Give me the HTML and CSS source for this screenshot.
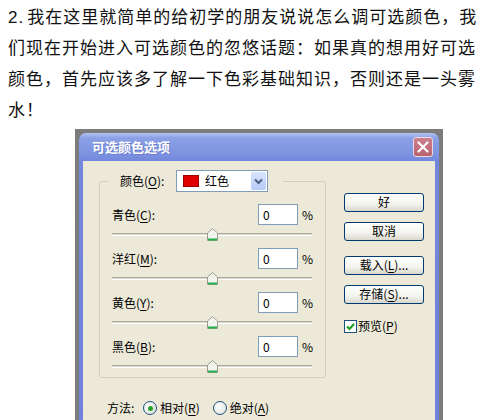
FILE: index.html
```html
<!DOCTYPE html>
<html>

<head>
    <meta charset="UTF-8">
    <title>可选颜色</title>
    <link rel="stylesheet" href="styles.css">
</head>

<body>
    <p class="intro"><span class="no">2.</span>我在这里就简单的给初学的朋友说说怎么调可选颜色，我们现在开始进入可选颜色的忽悠话题：如果真的想用好可选颜色，首先应该多了解一下色彩基础知识，否则还是一头雾水！</p>

    <div class="shot">
        <div class="dlg">
            <div class="dlg-title">
                <span>可选颜色选项</span>
                <a href="javascript:;" class="dlg-close">
                    <svg width="12" height="12" viewBox="0 0 12 12">
                        <path d="M1.5 1.5 L10.5 10.5 M10.5 1.5 L1.5 10.5" stroke="#fff" stroke-width="2.2" stroke-linecap="round" />
                    </svg>
                </a>
            </div>
            <div class="dlg-body">
                <div class="dlg-left">
                    <fieldset class="group">
                        <legend class="group-head">
                            <span class="lbl">颜色(<u>O</u>):</span>
                            <div class="select">
                                <i class="swatch"></i>
                                <span class="select-text">红色</span>
                                <b class="drop">
                                    <svg width="9" height="7" viewBox="0 0 9 7">
                                        <path d="M1 1.5 L4.5 5 L8 1.5" fill="none" stroke="#4d6185" stroke-width="2" />
                                    </svg>
                                </b>
                            </div>
                        </legend>

                        <div class="row">
                            <span class="lbl">青色(<u>C</u>):</span>
                            <span class="num">0</span>
                            <span class="pct">%</span>
                        </div>
                        <div class="slider">
                            <div class="track"></div>
                            <svg class="thumb" width="11" height="13" viewBox="0 0 11 13">
                                <path d="M0.5 5 L5.5 0.5 L10.5 5 L10.5 12.5 L0.5 12.5 Z" fill="#f4f4ef" stroke="#9a9a8c" />
                                <path d="M1 11.5 L10 11.5" stroke="#22b14c" stroke-width="2" />
                            </svg>
                        </div>

                        <div class="row">
                            <span class="lbl">洋红(<u>M</u>):</span>
                            <span class="num">0</span>
                            <span class="pct">%</span>
                        </div>
                        <div class="slider">
                            <div class="track"></div>
                            <svg class="thumb" width="11" height="13" viewBox="0 0 11 13">
                                <path d="M0.5 5 L5.5 0.5 L10.5 5 L10.5 12.5 L0.5 12.5 Z" fill="#f4f4ef" stroke="#9a9a8c" />
                                <path d="M1 11.5 L10 11.5" stroke="#22b14c" stroke-width="2" />
                            </svg>
                        </div>

                        <div class="row">
                            <span class="lbl">黄色(<u>Y</u>):</span>
                            <span class="num">0</span>
                            <span class="pct">%</span>
                        </div>
                        <div class="slider">
                            <div class="track"></div>
                            <svg class="thumb" width="11" height="13" viewBox="0 0 11 13">
                                <path d="M0.5 5 L5.5 0.5 L10.5 5 L10.5 12.5 L0.5 12.5 Z" fill="#f4f4ef" stroke="#9a9a8c" />
                                <path d="M1 11.5 L10 11.5" stroke="#22b14c" stroke-width="2" />
                            </svg>
                        </div>

                        <div class="row">
                            <span class="lbl">黑色(<u>B</u>):</span>
                            <span class="num">0</span>
                            <span class="pct">%</span>
                        </div>
                        <div class="slider">
                            <div class="track"></div>
                            <svg class="thumb" width="11" height="13" viewBox="0 0 11 13">
                                <path d="M0.5 5 L5.5 0.5 L10.5 5 L10.5 12.5 L0.5 12.5 Z" fill="#f4f4ef" stroke="#9a9a8c" />
                                <path d="M1 11.5 L10 11.5" stroke="#22b14c" stroke-width="2" />
                            </svg>
                        </div>
                    </fieldset>

                    <div class="method">
                        <span class="lbl">方法:</span>
                        <span class="radio on"><i></i>相对(<u>R</u>)</span>
                        <span class="radio"><i></i>绝对(<u>A</u>)</span>
                    </div>
                </div>

                <div class="dlg-right">
                    <a href="javascript:;" class="btn">好</a>
                    <a href="javascript:;" class="btn">取消</a>
                    <a href="javascript:;" class="btn btn-gap">载入(<u>L</u>)...</a>
                    <a href="javascript:;" class="btn">存储(<u>S</u>)...</a>
                    <div class="check">
                        <i>
                            <svg width="11" height="11" viewBox="0 0 11 11">
                                <path d="M2 5.5 L4.5 8 L9 3" fill="none" stroke="#21a121" stroke-width="2.2" />
                            </svg>
                        </i>
                        <span>预览(<u>P</u>)</span>
                    </div>
                </div>
            </div>
        </div>
    </div>
</body>

</html>
```

FILE: styles.css
```css
@charset "UTF-8";
/*初始化 reset*/

body,
p,
fieldset,
legend {
    margin: 0;
    padding: 0;
}

body {
    background: #fff;
    color: #000;
    overflow: hidden;
}

a {
    text-decoration: none;
    color: inherit;
}

u {
    text-underline-offset: 2px;
}

/* 正文 */
.intro {
    width: 474px;
    padding: 2px 0 0 8px;
    font: 17px/31px "Liberation Sans", "Noto Sans CJK SC", sans-serif;
    letter-spacing: 1px;
    color: #111;
}

.intro .no {
    margin-right: 3px;
}

/* 截图的灰底 */
.shot {
    width: 364px;
    margin: 3px 0 0 75px;
    padding: 4px 0 0 4px;
    background: #7c7c7c;
}

/* 对话框 */
.dlg {
    width: 352px;
    padding: 0 4px;
    border-radius: 7px 7px 0 0;
    background: linear-gradient(#b3c3f2 0, #8ba0e6 5px, #7e94e1 20px, #7387dc 28px, #6f81da 100%);
    font: 12px/16px "Noto Sans CJK SC", sans-serif;
    color: #000;
}

.dlg-title {
    height: 28px;
    display: flex;
    align-items: center;
    justify-content: space-between;
    margin: 0 -4px;
    padding: 0 3px 0 13px;
    font-weight: bold;
    font-size: 13px;
    color: #fff;
    text-shadow: 1px 1px 0 #6a7dcc;
}

.dlg-close {
    width: 20px;
    height: 20px;
    margin-right: 3px;
    display: flex;
    align-items: center;
    justify-content: center;
    box-sizing: border-box;
    border: 1px solid #eadbe2;
    border-radius: 3px;
    background: linear-gradient(#cc7f8e, #b9626f);
}

.dlg-body {
    display: flex;
    background: #ece9d8;
    padding: 9px 0 40px 16px;
}

/* 左侧 */
.dlg-left {
    width: 227px;
}

.group {
    border: 1px solid #d0d0bf;
    border-radius: 3px;
    padding: 12px 13px 0 12px;
    min-width: 0;
}

.group-head {
    display: flex;
    align-items: center;
    margin-left: -4px;
    padding: 0 15px 0 12px;
}

.group-head .lbl {
    width: 56px;
}

.select {
    width: 92px;
    height: 22px;
    box-sizing: border-box;
    display: flex;
    align-items: center;
    border: 1px solid #7f9db9;
    background: #fff;
    padding: 0 1px 0 6px;
}

.swatch {
    width: 16px;
    height: 12px;
    background: #e00000;
    border: 1px solid #900;
    box-sizing: border-box;
}

.select-text {
    flex: 1;
    margin-left: 6px;
}

.drop {
    width: 15px;
    height: 18px;
    display: flex;
    align-items: center;
    justify-content: center;
    border-radius: 2px;
    background: linear-gradient(#d9e4fd, #b7cbf8);
}

.row {
    display: flex;
    align-items: center;
    height: 21px;
}

.row .lbl {
    flex: 1;
}

.num {
    width: 40px;
    height: 21px;
    box-sizing: border-box;
    border: 1px solid #7f9db9;
    background: #fff;
    padding: 2px 0 0 4px;
}

.pct {
    width: 10px;
    margin-left: 4px;
}

.slider {
    height: 23px;
    position: relative;
}

.slider:last-child {
    height: 20px;
}

.track {
    position: relative;
    top: 8px;
    height: 1px;
    border-top: 1px solid #a8a89a;
    border-bottom: 1px solid #fff;
    background: #dcdacb;
}

.thumb {
    position: absolute;
    left: 95px;
    top: 3px;
}

.method {
    display: flex;
    align-items: center;
    height: 16px;
    margin-top: 22px;
    padding-left: 8px;
}

.method .lbl {
    width: 36px;
}

.radio {
    display: flex;
    align-items: center;
    margin-right: 13px;
}

.radio i {
    width: 14px;
    height: 14px;
    box-sizing: border-box;
    border: 1px solid #1c5180;
    border-radius: 50%;
    background: radial-gradient(circle at 40% 40%, #fff, #dcdcd6);
    margin-right: 3px;
    position: relative;
}

.radio.on i::after {
    content: "";
    position: absolute;
    left: 3.5px;
    top: 3.5px;
    width: 5px;
    height: 5px;
    border-radius: 50%;
    background: #21a121;
}

/* 右侧按钮 */
.dlg-right {
    margin: 23px 0 0 18px;
    width: 80px;
    display: flex;
    flex-direction: column;
}

.btn {
    height: 19px;
    box-sizing: border-box;
    margin-bottom: 10px;
    border: 1px solid #003c74;
    border-radius: 3px;
    background: linear-gradient(#fff, #f3f3ee 60%, #d9d7cb);
    text-align: center;
    line-height: 16px;
}

.btn-gap {
    margin-top: 5px;
}

.check {
    display: flex;
    align-items: center;
    margin-top: 4px;
}

.check i {
    width: 13px;
    height: 13px;
    box-sizing: border-box;
    border: 1px solid #1c5180;
    background: #fff;
    display: flex;
    align-items: center;
    justify-content: center;
    margin-right: 1px;
}
```
